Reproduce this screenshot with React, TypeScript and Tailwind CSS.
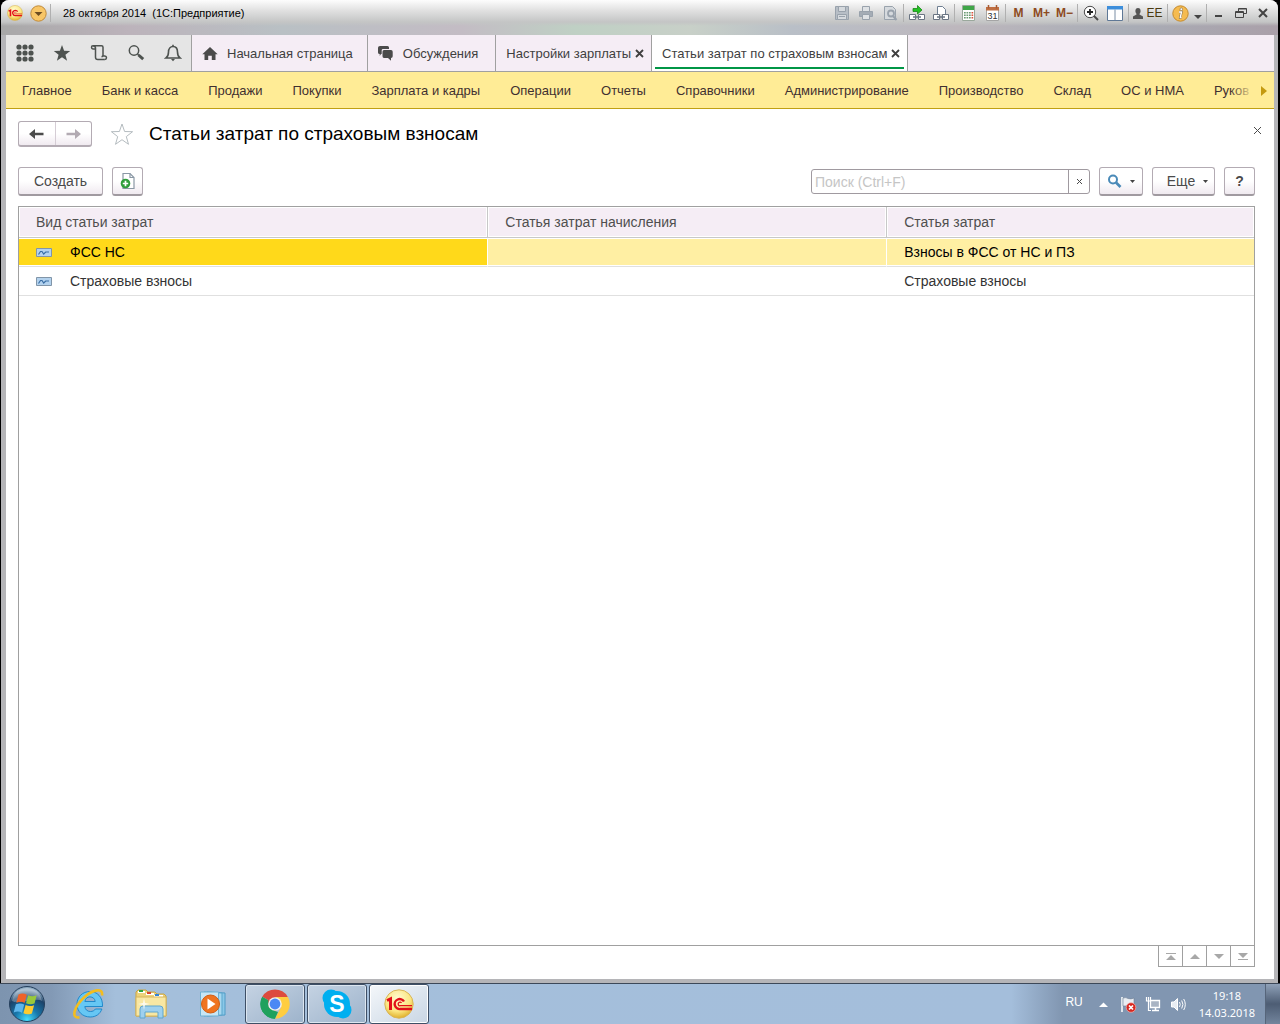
import { ReactNode } from "react";

type IconProps = { className?: string };

const GridIcon = () => (
  <svg width="18" height="18" viewBox="0 0 18 18" fill="#4d524f" aria-hidden="true">
    {[3, 9, 15].map((y) => [3, 9, 15].map((x) => <circle key={`${x}-${y}`} cx={x} cy={y} r="2.6" />))}
  </svg>
);

const StarIcon = () => (
  <svg width="18" height="18" viewBox="0 0 18 18" fill="#4d524f" aria-hidden="true">
    <path d="M9 1l2.100 5.800 6.100.2-4.800 3.800 1.700 6L9 13.300 3.900 16.800l1.700-6L.8 7l6.100-.2z" />
  </svg>
);

const HistoryIcon = () => (
  <svg width="18" height="18" viewBox="0 0 18 18" fill="none" stroke="#4d524f" strokeWidth="1.500" aria-hidden="true">
    <path d="M3 1.700h8.500q1.500 0 1.500 1.500V12" />
    <path d="M3 1.700q-1.500 0-1.500 1.600T3 5h2.500" />
    <path d="M3 1.700q2.500 0 2.500 2.500v9q0 2.300 2.300 2.300h7" />
    <path d="M14.800 15.500q1.700 0 1.700-1.700t-1.700-1.800H13q-1 0-1 1.200" />
  </svg>
);

const SearchIcon = () => (
  <svg width="18" height="18" viewBox="0 0 18 18" fill="none" stroke="#4d524f" aria-hidden="true">
    <circle cx="7" cy="6.500" r="4.700" strokeWidth="1.500" />
    <path d="M10.500 10l1.500 1.500" strokeWidth="1.500" />
    <path d="M11.500 11l4.700 4.200" strokeWidth="3" />
  </svg>
);

const BellIcon = () => (
  <svg width="18" height="18" viewBox="0 0 18 18" fill="none" stroke="#4d524f" strokeWidth="1.600" aria-hidden="true">
    <path d="M2 14c2-1.500 2.500-3 2.500-6C4.500 4.500 6.500 2.500 9 2.500s4.500 2 4.500 5.500c0 3 .5 4.500 2.500 6z" />
    <path d="M9 .8v2" />
    <path d="M7 15h4l-2 2.200z" fill="#4d524f" stroke="none" />
  </svg>
);

const HomeIcon = () => (
  <svg width="16" height="14" viewBox="0 0 16 14" fill="#4b4b4b" aria-hidden="true">
    <path d="M8 0l7.700 7.200H13.500V13H9.800V8.800H6.200V13H2.500V7.200H.3z" />
  </svg>
);

const ChatIcon = () => (
  <svg width="16" height="15" viewBox="0 0 16 15" fill="#4b4b4b" aria-hidden="true">
    <path d="M2 0h7.500q1.500 0 1.500 1.500V3H5Q3.700 3 3.700 4.300V8H3l-1.300 2V8Q0 8 0 6.500V1.800Q0 0 2 0z" />
    <path d="M6 4h7q1.700 0 1.700 1.700v4.600q0 1.700-1.700 1.700v2.700L10 12H6q-1.500 0-1.500-1.700V5.700Q4.500 4 6 4z" />
  </svg>
);

const CrossIcon = ({ className }: IconProps) => (
  <svg width="9" height="9" viewBox="0 0 9 9" fill="none" stroke="currentColor" className={className} aria-hidden="true">
    <path d="M1 1l7 7M8 1L1 8" />
  </svg>
);

const ArrowIcon = ({ className }: IconProps) => (
  <svg width="15" height="12" viewBox="0 0 15 12" fill="currentColor" className={className} aria-hidden="true">
    <path d="M0 6l6-5v3.700h8.500v2.600H6V11z" />
  </svg>
);

const Caret = () => (
  <svg width="5" height="3" viewBox="0 0 5 3" fill="#444" aria-hidden="true">
    <path d="M0 0h5L2.500 3z" />
  </svg>
);

const LogoIcon = ({ big = false }: { big?: boolean }) => (
  <svg width={big ? 30 : 16} height={big ? 30 : 16} viewBox="0 0 30 30" aria-hidden="true">
    <defs>
      <radialGradient id={big ? "logoBig" : "logoSmall"} cx="45%" cy="30%" r="70%">
        <stop offset="0" stopColor="#fffbd0" />
        <stop offset=".65" stopColor="#fbe680" />
        <stop offset="1" stopColor="#e0b02c" />
      </radialGradient>
    </defs>
    <circle cx="15" cy="15" r="14.200" fill={big ? "url(#logoBig)" : "url(#logoSmall)"} stroke="#d8b55a" />
    <path d="M3 11.500l3.500-1.700V21" fill="none" stroke="#e2101a" strokeWidth="3" />
    <path d="M20 12.500a5 5 0 1 0-3.500 7.500H28" fill="none" stroke="#e2101a" strokeWidth="2.400" />
    <path d="M17.500 14a1.800 1.800 0 1 0-1 2.700H28" fill="none" stroke="#e2101a" strokeWidth="1.300" />
  </svg>
);

const SaveIcon = () => (
  <svg width="16" height="16" viewBox="0 0 16 16" fill="none" stroke="#99a2ac" aria-hidden="true">
    <path d="M1.500 1.500h13v13h-13z" fill="#b7bec6" />
    <path d="M4.500 1.500h7v5h-7z" fill="#d6dade" />
    <path d="M3.500 9.500h9v5h-9z" fill="#d6dade" />
    <path d="M5 11.500h6" />
  </svg>
);

const PrintIcon = () => (
  <svg width="16" height="16" viewBox="0 0 16 16" fill="none" stroke="#99a2ac" aria-hidden="true">
    <path d="M4.500 1.500h7v5h-7z" fill="#dfe2e5" />
    <path d="M1.500 6.500h13v5h-13z" fill="#a4acb5" />
    <path d="M4.500 9.500h7v5h-7z" fill="#dfe2e5" />
  </svg>
);

const PreviewIcon = () => (
  <svg width="16" height="16" viewBox="0 0 16 16" fill="none" stroke="#99a2ac" aria-hidden="true">
    <path d="M2.500 1.500h8l3 3v10h-11z" fill="#d6dade" />
    <circle cx="9" cy="8.500" r="3" strokeWidth="1.800" />
    <path d="M11 11l3.500 4" strokeWidth="2" />
  </svg>
);

const LinkIcon = ({ page = false }: { page?: boolean }) => (
  <svg width="16" height="16" viewBox="0 0 16 16" fill="none" aria-hidden="true">
    {page ? (
      <path d="M4.500 9V1.500h5l3 3V9" fill="#fff" stroke="#6f7f92" />
    ) : (
      <path d="M4 3.500h4.500V.5L13 5 8.500 9V6.500H4z" fill="#22c322" stroke="#0c7d0c" strokeWidth=".7" />
    )}
    <path d="M.5 9.500h6v5h-6zM9.500 9.500h6v5h-6z" fill="#fff" stroke="#6a7482" />
    <path d="M4 12h8" stroke="#6a7482" strokeWidth="1.500" />
  </svg>
);

const CalculatorIcon = () => (
  <svg width="15" height="16" viewBox="0 0 15 16" aria-hidden="true">
    <path d="M1.500.5h12v15h-12z" fill="#fff" stroke="#9aa89c" />
    <path d="M2 1h11v4H2z" fill="#3fa648" />
    {[7, 9.5, 12].map((y) => (
      <g key={y}>
        <path d={`M3 ${y}h1.700v1.500H3zM5.500 ${y}h1.700v1.500H5.500zM8 ${y}h1.700v1.500H8z`} fill="#6a9a72" />
        <path d={`M10.500 ${y}h1.700v1.500h-1.700z`} fill="#d8503c" />
      </g>
    ))}
  </svg>
);

const CalendarIcon = () => (
  <svg width="15" height="16" viewBox="0 0 15 16" aria-hidden="true">
    <path d="M1.500 2.500h12v13h-12z" fill="#fff" stroke="#a5a5a5" />
    <path d="M1 2h13v3.500H1z" fill="#bf6f43" />
    <path d="M3.500 0v3.500M11.500 0v3.500" stroke="#a85a30" strokeWidth="1.500" />
    <text x="7.500" y="13.500" textAnchor="middle" fontSize="9" fontFamily="Liberation Sans, sans-serif" fill="#333">31</text>
  </svg>
);

const ZoomIcon = () => (
  <svg width="16" height="16" viewBox="0 0 16 16" fill="none" aria-hidden="true">
    <circle cx="7" cy="7" r="5.700" fill="#fff" stroke="#4a4a4a" />
    <path d="M7 4v6M4 7h6" stroke="#222" strokeWidth="1.800" />
    <path d="M11 11l4 4" stroke="#4a4a4a" strokeWidth="2" />
  </svg>
);

const PanelsIcon = () => (
  <svg width="16" height="15" viewBox="0 0 16 15" aria-hidden="true">
    <path d="M.5.5h15v14H.5z" fill="#fff" stroke="#5f7896" />
    <path d="M0 0h16v3.500H0z" fill="#3d8edb" />
    <path d="M8 3.500V14" stroke="#7b8ea5" />
  </svg>
);

const UserIcon = () => (
  <svg width="10" height="11" viewBox="0 0 10 11" fill="#555" aria-hidden="true">
    <ellipse cx="5" cy="3" rx="2.600" ry="3" />
    <path d="M3.500 5h3v1.500L10 8.500V11H0V8.500l3.500-2z" />
  </svg>
);

const InfoIcon = () => (
  <svg width="17" height="17" viewBox="0 0 17 17" aria-hidden="true">
    <circle cx="8.500" cy="8.500" r="7.700" fill="#f5bb50" stroke="#c48a2e" />
    <path d="M7 7h2.500L8.300 12.500h1.200" fill="none" stroke="#7d6a4a" strokeWidth="2.400" />
    <path d="M7 7h2.500L8.300 12.500h1.200" fill="none" stroke="#fff" strokeWidth="1.400" />
    <circle cx="9.300" cy="4.200" r="1.300" fill="#fff" stroke="#7d6a4a" strokeWidth=".6" />
  </svg>
);

const AddPageIcon = () => (
  <svg width="16" height="18" viewBox="0 0 16 18" className="shrink-0" fill="none" aria-hidden="true">
    <path d="M3 1.500h7l4 4v11H3z" fill="#fff" stroke="#8a98a5" strokeWidth="1.200" />
    <path d="M10 1.500v4h4" stroke="#8a98a5" strokeWidth="1.200" />
    <circle cx="5.500" cy="11.500" r="4.800" fill="#2f9e3b" />
    <path d="M5.500 8.800v5.400M2.800 11.500h5.400" stroke="#fff" strokeWidth="1.700" />
  </svg>
);

const RecordIcon = () => (
  <svg width="16" height="9" viewBox="0 0 16 9" fill="none" aria-hidden="true">
    <path d="M.5.5h15v8H.5z" fill="#b3d2ee" stroke="#8195a8" />
    <path d="M2.500 6.500l2-3 1.500 0 1.700 2.500 2-2h3.300" stroke="#3a6ea5" strokeWidth="1.200" />
  </svg>
);

const StartIcon = () => (
  <svg width="38" height="38" viewBox="0 0 38 38" aria-hidden="true">
    <defs>
      <radialGradient id="orb" cx="50%" cy="95%" r="85%">
        <stop offset="0" stopColor="#45e0ff" />
        <stop offset=".4" stopColor="#1878ac" />
        <stop offset=".8" stopColor="#1c4268" />
        <stop offset="1" stopColor="#8aa7bf" />
      </radialGradient>
    </defs>
    <circle cx="19" cy="19" r="17.500" fill="url(#orb)" stroke="#253f5c" />
    <path d="M4 16C6 6 13 3 19 3s13 3 15 13c-8-4-22 4-30 0z" fill="#fff" opacity=".3" />
    <path d="M10.500 9.500c3-1.500 5.500-1.300 8.300.2l-2.200 8.200c-2.800-1.500-5.200-1.500-8.300-.2z" fill="#ef6229" />
    <path d="M20.200 10.200c2.800 1.400 5.500 1.200 8.500.1l-2.200 8.300c-3.300 1.200-5.800.9-8.500-.4z" fill="#98c93c" />
    <path d="M7.900 19.300c3.100-1.300 5.500-1.200 8.300.2l-2.200 8.200c-2.800-1.400-5.200-1.500-8.300-.2z" fill="#5eb6ec" />
    <path d="M17.600 20c2.800 1.400 5.400 1.500 8.500.2l-2.200 8.200c-3.200 1.200-5.800 1.200-8.500-.2z" fill="#fecb2f" />
  </svg>
);

const ExplorerIcon = () => (
  <svg width="32" height="32" viewBox="0 0 32 32" aria-hidden="true">
    <path
      d="M17 3.500C24 3.500 30 9 29.500 18.500H11.800c.3 3 2.500 5 5.600 5 2.300 0 4-.9 5-2.500h6.500c-1.800 5-6 8-11.700 8C9.500 29 4 23.500 4 16.200S9.700 3.500 17 3.500zM11.900 13.500h10.300c-.3-2.800-2.400-4.600-5.200-4.600s-4.700 1.800-5.100 4.600z"
      fill="#66c7f4"
      stroke="#2189cb"
      fillRule="evenodd"
    />
    <path d="M6.500 29.300C-2.500 31 1 18.500 11.500 9 20 1.300 30.500-.5 29 7.500" fill="none" stroke="#f3bd20" strokeWidth="2.600" />
  </svg>
);

const FolderIcon = () => (
  <svg width="34" height="32" viewBox="0 0 34 32" aria-hidden="true">
    <path d="M2 4l2-2h8l2 2h7l2 2h7l2 2v20H2z" fill="#ecd27a" stroke="#c9a444" />
    <path d="M4 4h7M12 6h8M20 8h9" stroke="#fff" strokeWidth="2" />
    <path d="M5 3h4" stroke="#2ba53d" strokeWidth="2" />
    <path d="M13 5h4" stroke="#d9452b" strokeWidth="2" />
    <path d="M21 7h4" stroke="#3183d6" strokeWidth="2" />
    <path d="M2 9h30v19H2z" fill="#f8e7a3" stroke="#d6b65d" />
    <path d="M6 30V21q0-3 3-3h17q3 0 3 3v9h-5v-6H11v6z" fill="#9ed0ee" stroke="#5fa6cf" />
    <path d="M10 10l1 5 5 1-5 1-1 5-1-5-5-1 5-1z" fill="#fff" opacity=".8" />
  </svg>
);

const PlayerIcon = () => (
  <svg width="28" height="28" viewBox="0 0 28 28" aria-hidden="true">
    <path d="M8 2l18 1v22L8 26z" fill="#8bc8e8" stroke="#4f9cc6" />
    <path d="M5 2l18 1v22L5 26z" fill="#a8d8ef" stroke="#5aa5cc" />
    <path d="M1.500 2h18v24h-18z" fill="#c7e6f5" stroke="#6fb1d3" />
    <circle cx="11.500" cy="14" r="9" fill="#ef7420" stroke="#d35c10" />
    <path d="M8.500 8.500l8 5.500-8 5.500z" fill="#fff" />
  </svg>
);

const ChromeIcon = () => (
  <svg width="30" height="30" viewBox="0 0 30 30" aria-hidden="true">
    <path d="M15 15L2.300 7.700A14.700 14.700 0 0 1 27.700 7.700z" fill="#dd4b3e" />
    <path d="M15 15L2.300 7.700A14.700 14.700 0 0 0 15 29.700z" fill="#1fa15d" />
    <path d="M15 8h13a14.700 14.700 0 0 1-13 21.700L21 18.500z" fill="#ffcd40" />
    <path d="M15 8H8L9 18.500 15 22l6-3.500z" fill="#dd4b3e" />
    <path d="M2.300 7.700L9 18.500l6 3.500 3 1-3 6.700A14.700 14.700 0 0 1 2.300 7.700z" fill="#1fa15d" />
    <circle cx="15" cy="15" r="6.800" fill="#f1f1f1" />
    <circle cx="15" cy="15" r="5.400" fill="#4a88f4" />
  </svg>
);

const SkypeIcon = () => (
  <svg width="30" height="30" viewBox="0 0 30 30" aria-hidden="true">
    <circle cx="9" cy="9" r="8.500" fill="#00aff0" />
    <circle cx="21" cy="21" r="8.500" fill="#00aff0" />
    <circle cx="15" cy="15" r="13" fill="#00aff0" />
    <text x="15" y="23" textAnchor="middle" fontSize="23" fontWeight="700" fontFamily="Liberation Sans, sans-serif" fill="#fff">S</text>
  </svg>
);

const FlagIcon = () => (
  <svg width="17" height="17" viewBox="0 0 17 17" fill="none" aria-hidden="true">
    <path d="M2 1v15" stroke="#fff" strokeWidth="1.500" />
    <path d="M3 2q3-1 5 .5 3 1 6-.5v8H3z" fill="#e9edf2" stroke="#6d7d93" strokeWidth=".6" />
    <circle cx="11" cy="11.500" r="4.800" fill="#d7261e" stroke="#f2b5b1" strokeWidth=".7" />
    <path d="M9 9.500l4 4M13 9.500l-4 4" stroke="#fff" strokeWidth="1.700" />
  </svg>
);

const NetworkIcon = () => (
  <svg width="17" height="17" viewBox="0 0 17 17" fill="none" stroke="#fff" aria-hidden="true">
    <path d="M5.500 4.500h9v7h-9z" fill="#a9b4c3" strokeWidth="1.300" />
    <path d="M7 14.500h7M10.500 12v2" strokeWidth="1.500" />
    <path d="M1.500 1v4h4V1M3.500 1v13.500H6" strokeWidth="1.200" />
  </svg>
);

const VolumeIcon = () => (
  <svg width="17" height="15" viewBox="0 0 17 15" fill="none" stroke="#fff" aria-hidden="true">
    <path d="M1.500 5h2.500L7.500 1.500v12L4 10H1.500z" fill="#e8edf3" />
    <path d="M9.500 5q1.500 2.500 0 5M11.700 3.500q2.500 4 0 8M13.700 2q3.200 5.500 0 11" />
  </svg>
);

const Divider = () => <span className="mx-px h-[18px] w-px bg-[#b0b0b0]" />;

const TitleButton = ({ label, className = "w-6", children }: { label: string; className?: string; children: ReactNode }) => (
  <button type="button" aria-label={label} className={`flex h-6 shrink-0 items-center justify-center ${className}`}>
    {children}
  </button>
);

const TitleBar = () => (
  <header className="flex h-[35px] shrink-0 items-start rounded-t-lg bg-[linear-gradient(to_bottom,#fdfdfd_0,#e2e2e2_10px,#c4c5c5_22px,transparent_26px),linear-gradient(to_right,#a8a8a8,#bcb3bb_10%,#b9c0c4_22%,#c3bcc4_36%,#bfd0c4_45%,#c8d0c8_54%,#b9bfc7_62%,#bdb7bd_75%,#a9adb6_88%,#aaa0a9)] pl-0.5 pr-1 pt-px">
    <div className="flex h-6 flex-1 items-center">
      <span className="flex w-6 justify-center"><LogoIcon /></span>
      <button type="button" aria-label="Главное меню" className="flex w-[22px] justify-center">
        <svg width="17" height="17" viewBox="0 0 17 17" aria-hidden="true">
          <circle cx="8.500" cy="8.500" r="7.700" fill="#f8c667" stroke="#c08a3a" />
          <path d="M4.500 7h8l-4 4z" fill="#6c4c22" />
        </svg>
      </button>
      <Divider />
      <h1 className="ml-[11px] whitespace-pre text-[11px] text-black">28 октября 2014  (1С:Предприятие)</h1>
    </div>
    <div className="flex h-6 items-center">
      <TitleButton label="Сохранить"><SaveIcon /></TitleButton>
      <TitleButton label="Печать"><PrintIcon /></TitleButton>
      <TitleButton label="Предварительный просмотр"><PreviewIcon /></TitleButton>
      <Divider />
      <TitleButton label="Перейти по ссылке"><LinkIcon /></TitleButton>
      <TitleButton label="Получить ссылку"><LinkIcon page /></TitleButton>
      <Divider />
      <TitleButton label="Калькулятор"><CalculatorIcon /></TitleButton>
      <TitleButton label="Календарь"><CalendarIcon /></TitleButton>
      <Divider />
      {["M", "M+", "M−"].map((item) => (
        <button key={item} type="button" className="h-6 w-[23px] text-xs font-bold text-[#8d4a21]">
          {item}
        </button>
      ))}
      <Divider />
      <TitleButton label="Масштаб"><ZoomIcon /></TitleButton>
      <TitleButton label="Панели"><PanelsIcon /></TitleButton>
      <Divider />
      <button type="button" className="flex h-6 w-9 items-center justify-center gap-[3px] text-xs text-[#4a3a10]">
        <UserIcon />
        ЕЕ
      </button>
      <Divider />
      <TitleButton label="О программе" className="w-[22px]"><InfoIcon /></TitleButton>
      <TitleButton label="Еще" className="w-[14px] pt-2">
        <svg width="8" height="4" viewBox="0 0 8 4" fill="#444" aria-hidden="true"><path d="M0 0h8L4 4z" /></svg>
      </TitleButton>
      <Divider />
      <TitleButton label="Свернуть" className="w-[22px]">
        <svg width="12" height="12" viewBox="0 0 12 12" aria-hidden="true"><path d="M2 8h7v2H2z" fill="#444" /></svg>
      </TitleButton>
      <TitleButton label="Восстановить" className="w-[22px]">
        <svg width="12" height="12" viewBox="0 0 12 12" fill="none" stroke="#444" aria-hidden="true">
          <path d="M3.500 4.500v-3h8v5h-3M3.500 2h8" />
          <path d="M.5 4.500h8v6h-8zM.5 5.500h8" />
        </svg>
      </TitleButton>
      <TitleButton label="Закрыть" className="w-[22px]">
        <svg width="10" height="10" viewBox="0 0 10 10" stroke="#444" strokeWidth="2" aria-hidden="true"><path d="M1 1l8 8M9 1L1 9" /></svg>
      </TitleButton>
    </div>
  </header>
);

const tools = [
  { label: "Меню функций", icon: <GridIcon /> },
  { label: "Избранное", icon: <StarIcon /> },
  { label: "История", icon: <HistoryIcon /> },
  { label: "Поиск", icon: <SearchIcon /> },
  { label: "Оповещения", icon: <BellIcon /> },
];

const TabBar = () => (
  <div className="flex h-[37px] shrink-0 border-b border-[#a0a0a0] bg-[#f5edf5] text-[13px] text-[#3f3f3f]">
    <div className="flex border-r border-[#a0a0a0] bg-[#e5e5e5]">
      {tools.map((tool) => (
        <button key={tool.label} type="button" aria-label={tool.label} className="flex w-[37px] items-center justify-center">
          {tool.icon}
        </button>
      ))}
    </div>
    <button type="button" className="flex items-center gap-[9px] border-r border-[#a0a0a0] pl-[10px] pr-[14px] pt-px">
      <HomeIcon />
      Начальная страница
    </button>
    <button type="button" className="flex items-center gap-[9px] border-r border-[#a0a0a0] pl-[10px] pr-[17px] pt-px">
      <ChatIcon />
      Обсуждения
    </button>
    <div className="flex items-center gap-1 border-r border-[#a0a0a0] pl-[10px] pr-[7px] pt-px">
      <button type="button">Настройки зарплаты</button>
      <button type="button" aria-label="Закрыть вкладку"><CrossIcon className="stroke-[1.8]" /></button>
    </div>
    <div className="flex border-r border-[#a0a0a0] bg-white px-[3px] pb-0.5">
      <div className="flex items-center gap-1 border-b-2 border-[#009646] pl-[7px] pr-1 pt-[5px]">
        <button type="button">Статьи затрат по страховым взносам</button>
        <button type="button" aria-label="Закрыть вкладку"><CrossIcon className="stroke-[1.8]" /></button>
      </div>
    </div>
  </div>
);

const sections = [
  "Главное", "Банк и касса", "Продажи", "Покупки", "Зарплата и кадры", "Операции", "Отчеты",
  "Справочники", "Администрирование", "Производство", "Склад", "ОС и НМА", "Руков",
];

const SectionMenu = () => (
  <nav className="flex h-[37px] shrink-0 items-center border-b border-[#c0a012] bg-[#ffec96] pt-px text-[13px] text-[#3f3030]">
    <div className="relative flex min-w-0 flex-1 gap-[30px] overflow-hidden pl-4">
      {sections.map((section) => (
        <a key={section} href="#" className="shrink-0">{section}</a>
      ))}
      <span className="absolute inset-y-0 right-0 w-6 bg-linear-to-r from-transparent to-[#ffec96]" />
    </div>
    <button type="button" aria-label="Далее" className="flex w-5 justify-center">
      <svg width="6" height="10" viewBox="0 0 6 10" fill="#c49a10" aria-hidden="true"><path d="M0 0l6 5-6 5z" /></svg>
    </button>
  </nav>
);

const buttonStyle =
  "flex h-[29px] items-center justify-center rounded-[3px] border border-[#b3abb3] border-b-2 border-b-[#a09aa0] bg-linear-to-b from-white from-50% to-[#f0eaf0] text-sm text-[#4a4a4a]";

const PageHeader = () => (
  <div className="flex h-[26px] items-center">
    <div className="flex h-[26px] w-[74px] rounded-[3px] border border-[#b3abb3] border-b-2 bg-linear-to-b from-white from-50% to-[#f0eaf0]">
      <button type="button" aria-label="Назад" className="flex flex-1 items-center justify-center border-r border-[#d5cdd5]">
        <ArrowIcon className="text-[#4b4b4b]" />
      </button>
      <button type="button" aria-label="Вперед" className="flex flex-1 items-center justify-center">
        <ArrowIcon className="rotate-180 text-[#b3abb3]" />
      </button>
    </div>
    <button type="button" aria-label="Добавить в избранное" className="ml-[18px]">
      <svg width="24" height="24" viewBox="0 0 24 24" fill="none" stroke="#b5bcc0" aria-hidden="true">
        <path d="M12 2l2.600 7.500 8 .2-6.300 4.900 2.200 7.700L12 17.700l-6.500 4.600 2.200-7.700L1.400 9.700l8-.2z" />
      </svg>
    </button>
    <h2 className="ml-[15px] flex-1 text-[19px] text-black">Статьи затрат по страховым взносам</h2>
    <button type="button" aria-label="Закрыть" className="-mr-2 mb-2 p-px text-[#4b4b4b]">
      <CrossIcon />
    </button>
  </div>
);

const CommandBar = () => (
  <div className="mt-5 flex items-center">
    <button type="button" className={`${buttonStyle} w-[85px]`}>Создать</button>
    <button type="button" aria-label="Создать копированием" className={`${buttonStyle} ml-[9px] w-[31px]`}>
      <AddPageIcon />
    </button>
    <div className="ml-auto flex h-[25px] w-[279px] rounded-[3px] border border-[#a09aa0] bg-white">
      <input
        type="text"
        aria-label="Поиск"
        placeholder="Поиск (Ctrl+F)"
        className="min-w-0 flex-1 px-[3px] text-sm outline-none placeholder:text-[#c5c5c5]"
      />
      <button type="button" aria-label="Очистить" className="flex w-[21px] items-center justify-center border-l border-[#a09aa0] text-[#4b4b4b]">
        <svg width="7" height="7" viewBox="0 0 7 7" stroke="currentColor" aria-hidden="true">
          <path d="M1 1l5 5M6 1L1 6" />
        </svg>
      </button>
    </div>
    <button type="button" aria-label="Найти" className={`${buttonStyle} ml-[9px] w-11 gap-2`}>
      <svg width="15" height="15" viewBox="0 0 15 15" fill="none" stroke="#4a8ab8" aria-hidden="true">
        <circle cx="6" cy="5.500" r="4" strokeWidth="2" />
        <path d="M9 8.500l4.500 4.500" strokeWidth="2.600" />
      </svg>
      <Caret />
    </button>
    <button type="button" className={`${buttonStyle} ml-[9px] w-[63px] gap-2 pl-2`}>
      Еще
      <Caret />
    </button>
    <button type="button" aria-label="Справка" className={`${buttonStyle} ml-[9px] w-[31px] text-base font-bold`}>?</button>
  </div>
);

const rows = [
  { kind: "ФСС НС", accrual: "", item: "Взносы в ФСС от НС и ПЗ", selected: true },
  { kind: "Страховые взносы", accrual: "", item: "Страховые взносы", selected: false },
];

const CostTable = () => (
  <div className="mt-[10px] flex-1 border border-[#a0a0a0] bg-white">
    <table className="w-full table-fixed border-separate border-spacing-0 text-left text-sm">
      <colgroup>
        <col className="w-[38%]" />
        <col className="w-[32.3%]" />
        <col />
      </colgroup>
      <thead>
        <tr className="h-[31px] bg-[#f5edf5] text-[#4f4f4f] *:border-b *:border-[#c8c8c8] *:pl-[17px] *:font-normal *:shadow-[inset_0_0_0_1px_#fff]">
          <th className="border-r">Вид статьи затрат</th>
          <th className="border-r">Статья затрат начисления</th>
          <th>Статья затрат</th>
        </tr>
      </thead>
      <tbody>
        {rows.map((row) => (
          <tr
            key={row.kind}
            className={`h-[29px] *:border-b *:border-b-[#e0e0e0] *:pl-[17px] ${row.selected ? "bg-[#ffefa3] text-black *:shadow-[inset_0_1px_#fff,inset_0_-1px_#fff]" : "text-[#333]"}`}
          >
            <td className={row.selected ? "border-r border-r-white bg-[#ffd91a]" : ""}>
              <span className="flex items-center gap-[18px]">
                <RecordIcon />
                {row.kind}
              </span>
            </td>
            <td className={row.selected ? "border-r border-r-white" : ""}>{row.accrual}</td>
            <td>{row.item}</td>
          </tr>
        ))}
      </tbody>
    </table>
  </div>
);

const pagers = [
  { label: "В начало", path: "M1 1h10v1H1zM6 3l5 5H1z" },
  { label: "Вверх", path: "M6 2l5 5H1z" },
  { label: "Вниз", path: "M1 2h10L6 7z" },
  { label: "В конец", path: "M1 1h10L6 6zM1 7h10v1H1z" },
];

const Pager = () => (
  <div className="ml-auto flex h-[21px] border-b border-l border-[#a0a0a0]">
    {pagers.map((pager) => (
      <button key={pager.label} type="button" aria-label={pager.label} className="flex w-6 items-center justify-center border-r border-[#a0a0a0]">
        <svg width="12" height="9" viewBox="0 0 12 9" fill="#a8a8a8" aria-hidden="true"><path d={pager.path} /></svg>
      </button>
    ))}
  </div>
);

const apps = [
  { label: "Internet Explorer", icon: <ExplorerIcon />, style: "border-transparent" },
  { label: "Проводник", icon: <FolderIcon />, style: "border-transparent" },
  { label: "Проигрыватель", icon: <PlayerIcon />, style: "border-transparent" },
  { label: "Chrome", icon: <ChromeIcon />, style: "border-[#3e4f66] bg-linear-to-br from-[#c5d3e3] to-[#9db3cb] shadow-[inset_0_0_0_1px_#dce6f0]" },
  { label: "Skype", icon: <SkypeIcon />, style: "border-[#3e4f66] bg-linear-to-br from-[#c5d3e3] to-[#9db3cb] shadow-[inset_0_0_0_1px_#dce6f0]" },
  { label: "1С:Предприятие", icon: <LogoIcon big />, style: "border-[#3e4f66] bg-linear-to-br from-[#f4f7fa] to-[#c9d6e4] shadow-[inset_0_0_0_1px_#fff]" },
];

const Taskbar = () => (
  <footer className="flex h-[41px] shrink-0 items-stretch border-t border-[#3c4858] bg-[linear-gradient(to_right,#7d94af,#8299b5_4%,#a4bfdb_9%,#a4bedb_79%,#8196b1_83%,#8196b1)] font-['Noto_Sans',sans-serif] text-[11px] text-white">
    <button type="button" aria-label="Пуск" className="flex w-[59px] items-center pl-2"><StartIcon /></button>
    <div className="flex flex-1 gap-0.5">
      {apps.map((app) => (
        <button key={app.label} type="button" aria-label={app.label} className={`flex w-[60px] items-center justify-center rounded-[3px] border ${app.style}`}>
          {app.icon}
        </button>
      ))}
    </div>
    <div className="flex items-center gap-2">
      <button type="button" className="mb-1 mr-2 font-['Liberation_Sans',sans-serif] text-xs">RU</button>
      <button type="button" aria-label="Скрытые значки" className="mr-1">
        <svg width="9" height="5" viewBox="0 0 9 5" fill="#fff" aria-hidden="true"><path d="M0 5l4.500-4.500L9 5z" /></svg>
      </button>
      <button type="button" aria-label="Центр поддержки"><FlagIcon /></button>
      <button type="button" aria-label="Сеть"><NetworkIcon /></button>
      <button type="button" aria-label="Громкость"><VolumeIcon /></button>
      <time className="ml-1 text-center leading-[17px]">19:18<br />14.03.2018</time>
    </div>
    <button type="button" aria-label="Свернуть все окна" className="ml-[10px] w-[15px] border-l border-[#56657a] bg-linear-to-b from-[#8fa1b8] via-[#4d5d74] to-[#73859d]" />
  </footer>
);

export default function App() {
  return (
    <div className="flex min-h-screen flex-col bg-black font-['Liberation_Sans',Arial,sans-serif]">
      <div className="ml-px mr-0.5 flex flex-1 flex-col rounded-t-lg bg-[#b5b5b8]">
        <TitleBar />
        <main className="mb-1 ml-[5px] mr-1 flex flex-1 flex-col bg-white">
          <TabBar />
          <SectionMenu />
          <section className="flex flex-1 flex-col pb-3 pl-3 pr-[19px] pt-3">
            <PageHeader />
            <CommandBar />
            <CostTable />
            <Pager />
          </section>
        </main>
      </div>
      <Taskbar />
    </div>
  );
}
